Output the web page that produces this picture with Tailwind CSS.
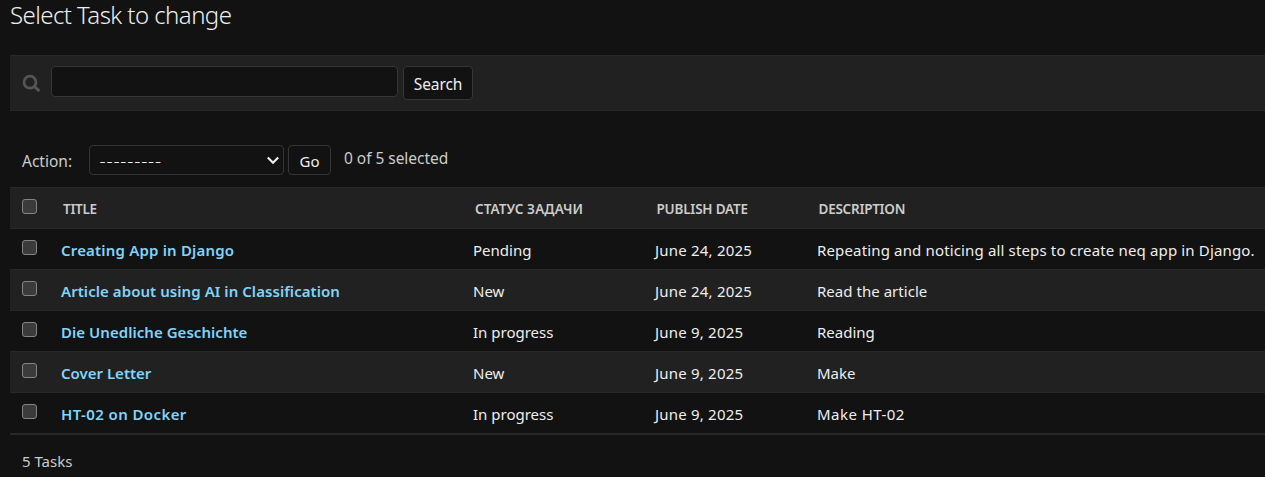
<!DOCTYPE html>
<html lang="en">
<head>
<meta charset="utf-8">
<title>Select Task to change</title>
<script src="https://cdn.jsdelivr.net/npm/@tailwindcss/browser@4"></script>
</head>
<body class="h-[477px] overflow-hidden bg-[#121212] pl-2.5 font-['Noto_Sans','Open_Sans',sans-serif] text-[15px] text-[#eeeeee]">
<h1 class="h-[55px] pt-px text-[24px] leading-[27px] font-light tracking-[-0.56px]">Select Task to change</h1>

<form class="flex h-14 items-start border-y border-[#282828] bg-[#212121] pt-2.5 pl-3">
  <svg class="mt-2 mr-[11px] h-[18px] w-[18px]" viewBox="0 0 18 18" fill="none" stroke="#555555"><circle cx="8" cy="8.2" r="6" stroke-width="2.7"/><path d="M12.5 12.6L16.3 16.2" stroke-width="3" stroke-linecap="round"/></svg>
  <input type="text" aria-label="Search" class="h-[31px] w-[347px] rounded-[4px] border border-[#353535] bg-[#121212]">
  <button type="button" class="ml-[5px] h-[34px] w-[70px] rounded-[4px] border border-[#353535] bg-[#121212] pt-px text-[15.5px] leading-[32px] tracking-[-0.1px]">Search</button>
</form>

<div class="flex h-[76px] items-start pt-[34px] pl-3">
  <span class="w-[67px] pt-1 text-[15.5px] leading-6 text-[#cccccc]">Action:</span>
  <div class="flex h-[30px] w-[195px] items-center justify-between rounded-[4px] border border-[#353535] pr-1 pl-[9.5px]">
    <span class="text-[19px] leading-6 font-light tracking-[0.82px]">---------</span>
    <svg class="h-3 w-3" viewBox="0 0 12 12" fill="none" stroke="#eeeeee" stroke-width="2.2"><path d="M0.8 3.5L6 8.7L11.2 3.5"/></svg>
  </div>
  <button type="button" class="ml-1 h-[30px] w-[43px] rounded-[4px] border border-[#353535] bg-[#121212] pt-px leading-[28px]">Go</button>
  <span class="pt-px pl-[13px] text-[15.5px] leading-6 tracking-[-0.04px] text-[#cccccc]">0 of 5 selected</span>
</div>

<div class="border-b border-[#282828] [&>div]:grid [&>div]:h-[41px] [&>div]:grid-cols-[51px_412px_182px_162px_448px] [&>div]:whitespace-nowrap [&>div]:border-t [&>div]:border-[#282828] [&>div]:leading-[43px] [&_i]:mt-[11px] [&_i]:ml-3 [&_i]:block [&_i]:h-[15px] [&_i]:w-[15px] [&_i]:rounded-[3px] [&_i]:border [&_i]:border-[#858585] [&_i]:bg-[#3b3b3b] [&_b]:font-semibold [&_b]:text-[#81d4fa]">
  <div class="bg-[#212121] text-[13.5px] font-semibold text-[#cccccc]"><i></i><span class="pl-0.5 tracking-[-0.3px]">TITLE</span><span class="pl-0.5 tracking-[0.1px]">СТАТУС ЗАДАЧИ</span><span class="pl-[1.5px] tracking-[-0.2px]">PUBLISH DATE</span><span class="pl-[1.5px] tracking-[-0.25px]">DESCRIPTION</span></div>
  <div><i></i><b class="tracking-[0.18px]">Creating App in Django</b><span>Pending</span><span class="tracking-[0.2px]">June 24, 2025</span><span class="tracking-[0.15px]">Repeating and noticing all steps to create neq app in Django.</span></div>
  <div class="bg-[#212121]"><i></i><b class="tracking-[0.06px]">Article about using AI in Classification</b><span>New</span><span class="tracking-[0.2px]">June 24, 2025</span><span class="tracking-[0.03px]">Read the article</span></div>
  <div><i></i><b class="tracking-[0.04px]">Die Unedliche Geschichte</b><span>In progress</span><span class="tracking-[0.2px]">June 9, 2025</span><span>Reading</span></div>
  <div class="bg-[#212121]"><i></i><b>Cover Letter</b><span>New</span><span class="tracking-[0.2px]">June 9, 2025</span><span>Make</span></div>
  <div><i></i><b class="tracking-[0.4px]">HT-02 on Docker</b><span>In progress</span><span class="tracking-[0.2px]">June 9, 2025</span><span class="tracking-[0.45px]">Make HT-02</span></div>
</div>
<p class="border-t border-[#282828] pt-3.5 pl-3 leading-6 text-[#cccccc]">5 Tasks</p>
</body>
</html>
